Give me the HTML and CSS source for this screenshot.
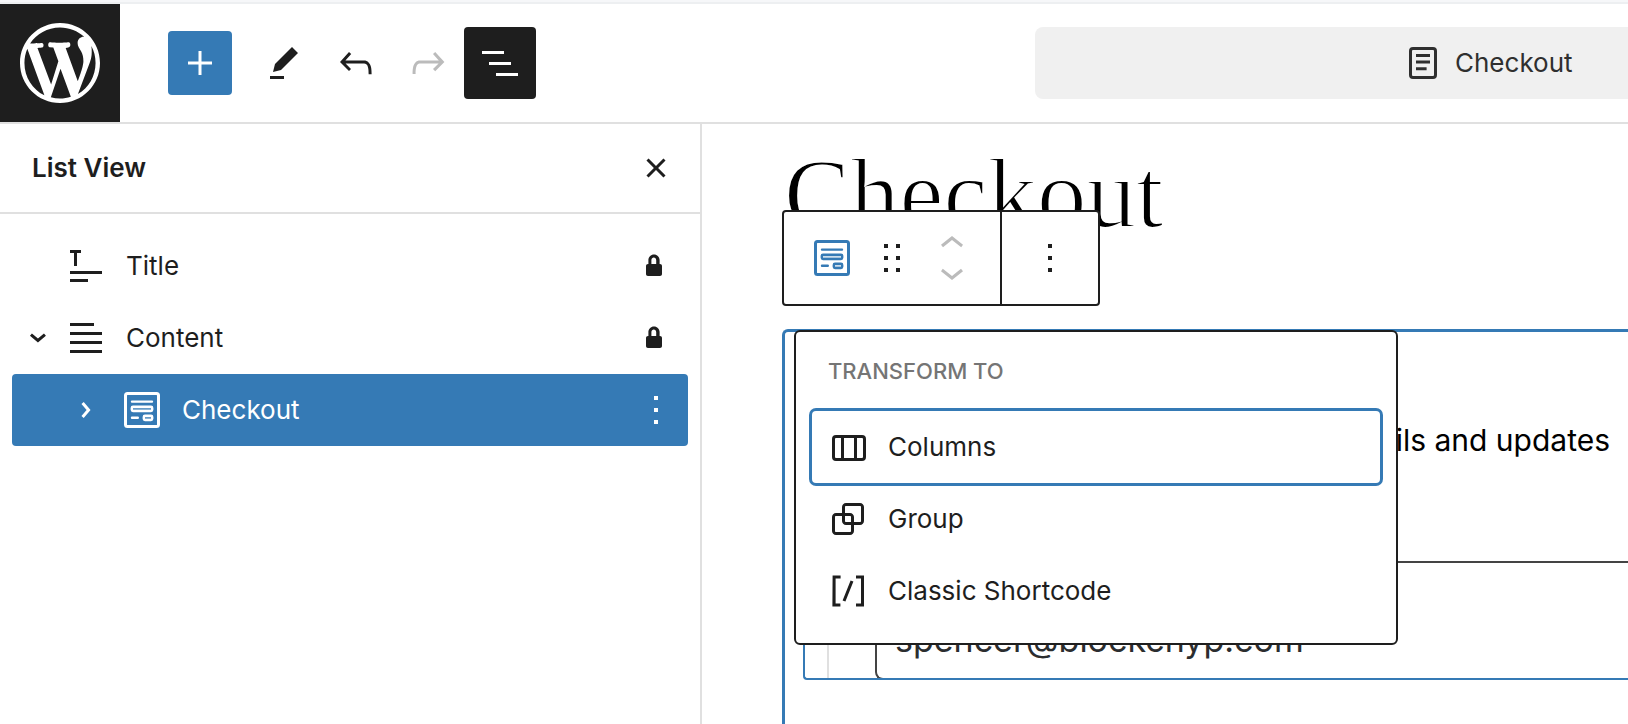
FILE: index.html
```html
<!DOCTYPE html>
<html lang="en">
<head>
<meta charset="utf-8">
<title>Checkout</title>
<link rel="stylesheet" href="styles.css">
</head>
<body>
<svg class="defs" aria-hidden="true">
  <symbol id="checkout" viewBox="0 0 24 24">
    <g fill="none" stroke="currentColor" stroke-linecap="round">
      <rect x="3.75" y="3.75" width="16.5" height="16.5" rx="1" stroke-width="1.5"/>
      <path d="M7 7.800H17M7 15.850H9.900" stroke-width="1.200"/>
      <rect x="6.900" y="10.400" width="10.200" height="2.100" rx=".6" fill="currentColor" fill-opacity=".25" stroke-width="1.200"/>
      <rect x="12.900" y="14.900" width="4.200" height="2.100" rx=".6" fill="currentColor" fill-opacity=".25" stroke-width="1.200"/>
    </g>
  </symbol>
  <symbol id="more" viewBox="0 0 24 24"><path d="M13 19h-2v-2h2v2zm0-6h-2v-2h2v2zm0-6h-2V5h2v2z"/></symbol>
  <symbol id="lock" viewBox="0 0 24 24"><path d="M15 11h-.2V9c0-1.5-1.2-2.8-2.8-2.8S9.2 7.500 9.200 9v2H9c-.6 0-1 .4-1 1v4c0 .6.4 1 1 1h6c.6 0 1-.4 1-1v-4c0-.6-.4-1-1-1zm-1.800 0h-2.500V9c0-.7.6-1.200 1.200-1.200s1.200.6 1.200 1.200v2z"/></symbol>
  <symbol id="chevron" viewBox="0 0 24 24"><path d="M10.862 8.040L14.280 12.029L10.862 16.017L9.723 15.040L12.305 12.029L9.723 9.017L10.862 8.040Z"/></symbol>
</svg>

<header class="topbar">
  <a class="logo" href="#" aria-label="View pages">
    <svg viewBox="0 0 20 20"><path d="M20 10c0-5.510-4.490-10-10-10C4.480 0 0 4.490 0 10c0 5.520 4.480 10 10 10 5.510 0 10-4.480 10-10zM7.780 15.370L4.370 6.220c.55-.02 1.170-.08 1.170-.08.5-.06.44-1.130-.06-1.110 0 0-1.450.11-2.370.11-.18 0-.37 0-.58-.01C4.120 2.690 6.870 1.110 10 1.110c2.330 0 4.450.87 6.050 2.340-.68-.11-1.650.39-1.650 1.580 0 .74.45 1.360.9 2.100.35.61.55 1.360.55 2.460 0 1.490-1.400 5-1.400 5l-3.030-8.370c.54-.02.82-.17.82-.17.5-.05.44-1.250-.06-1.220 0 0-1.440.12-2.380.12-.87 0-2.330-.12-2.330-.12-.5-.03-.56 1.200-.06 1.220l.92.08 1.260 3.410zM17.410 10c.24-.64.74-1.870.43-4.250.7 1.290 1.050 2.710 1.050 4.250 0 3.290-1.730 6.240-4.400 7.780.97-2.590 1.940-5.200 2.920-7.780zM6.100 18.090C3.120 16.650 1.110 13.530 1.110 10c0-1.300.23-2.480.72-3.590C3.250 10.300 4.670 14.200 6.100 18.090zm4.030-6.630l2.580 6.980c-.86.29-1.760.45-2.710.45-.79 0-1.570-.11-2.290-.33.81-2.380 1.620-4.740 2.420-7.100z"/></svg>
  </a>
  <div class="tools">
    <button class="tool add" type="button" aria-label="Add block"><svg class="icon" viewBox="0 0 24 24"><path d="M11.250 12.750V18H12.750V12.750H18V11.250H12.750V6H11.250V11.250H6V12.750H11.250Z"/></svg></button>
    <button class="tool" type="button" aria-label="Tools"><svg class="icon" viewBox="0 0 24 24"><path d="m19 7-3-3-8.500 8.500-1 4 4-1L19 7Zm-7 11.500H5V20h7v-1.500Z"/></svg></button>
    <button class="tool" type="button" aria-label="Undo"><svg class="icon" viewBox="0 0 24 24"><path d="M18.300 11.700c-.6-.6-1.400-.9-2.300-.9H6.700l2.900-3.300-1.100-1-4.500 5L8.500 16l1-1-2.700-2.700H16c.5 0 .9.2 1.300.5 1 1 1 3.400 1 4.500v.3h1.500v-.2c0-1.500 0-4.300-1.500-5.700z"/></svg></button>
    <button class="tool" type="button" aria-label="Redo" disabled><svg class="icon" viewBox="0 0 24 24"><path d="M15.600 6.500l-1.100 1 2.900 3.300H8c-.9 0-1.700.3-2.300.9-1.400 1.500-1.400 4.200-1.400 5.600v.2h1.500v-.3c0-1.100 0-3.500 1-4.500.3-.3.7-.5 1.300-.5h9.200L14.500 15l1.100 1.100 4.600-4.600-4.600-5z"/></svg></button>
    <button class="tool active" type="button" aria-label="List View" aria-pressed="true"><svg class="icon" viewBox="0 0 24 24"><path d="M3 6h11v1.500H3V6Zm3.500 5.500h11V13h-11v-1.500ZM21 17H10v1.500h11V17Z"/></svg></button>
  </div>
  <button class="document" type="button">
    <svg class="icon" viewBox="0 0 24 24"><path d="M15.500 7.500h-7V9h7V7.500Zm-7 3.300h7v1.500h-7V10.800Zm5.300 3.300h-5.300v1.500h5.300v-1.500Z"/><path fill-rule="evenodd" d="M17 4H7a2 2 0 0 0-2 2v12a2 2 0 0 0 2 2h10a2 2 0 0 0 2-2V6a2 2 0 0 0-2-2ZM7 5.500h10a.5.5 0 0 1 .5.5v12a.5.5 0 0 1-.5.5H7a.5.5 0 0 1-.5-.5V6a.5.5 0 0 1 .5-.5Z"/></svg>
    <span>Checkout</span>
  </button>
</header>

<div class="workspace">
  <aside class="sidebar">
    <div class="sidebar-head">
      <h2>List View</h2>
      <button class="plain" type="button" aria-label="Close"><svg class="icon" viewBox="0 0 24 24"><path d="M12 13.060l3.712 3.713 1.061-1.060L13.061 12l3.712-3.712-1.060-1.060L12 10.938 8.288 7.227l-1.061 1.060L10.939 12l-3.712 3.712 1.060 1.061L12 13.061z"/></svg></button>
    </div>
    <ul class="tree">
      <li class="row">
        <span class="spacer"></span>
        <a href="#"><svg class="icon" viewBox="0 0 24 24"><path d="m4 5.500h2v6.500h1.500v-6.500h2v-1.500h-5.500v1.500zm16 10.500h-16v-1.500h16v1.500zm-7 4h-9v-1.500h9v1.500z"/></svg>Title</a>
        <svg class="icon lock"><use href="#lock"/></svg>
      </li>
      <li class="row">
        <button class="plain" type="button" aria-label="Collapse"><svg class="icon down"><use href="#chevron"/></svg></button>
        <a href="#"><svg class="icon" viewBox="0 0 24 24"><path d="M4 4.500h12V6H4zM4 9h16v1.500H4zM4 13.500h16V15H4zM4 18h16v1.500H4z"/></svg>Content</a>
        <svg class="icon lock"><use href="#lock"/></svg>
      </li>
      <li class="row nested selected">
        <button class="plain" type="button" aria-label="Expand"><svg class="icon"><use href="#chevron"/></svg></button>
        <a href="#"><svg class="icon"><use href="#checkout"/></svg>Checkout</a>
        <button class="plain" type="button" aria-label="Options"><svg class="icon"><use href="#more"/></svg></button>
      </li>
    </ul>
  </aside>

  <main class="canvas">
    <h1>Checkout</h1>
    <section class="block">
      <div class="fields">
        <div class="step">
          <p>We'll email you details and updates</p>
          <input type="email" aria-label="Email address" value="spencer@blockchyp.com">
        </div>
      </div>
    </section>

    <div class="toolbar" role="toolbar" aria-label="Block tools">
      <div class="group">
        <button class="plain blue" type="button" aria-label="Checkout"><svg class="icon"><use href="#checkout"/></svg></button>
        <button class="plain" type="button" aria-label="Drag"><svg class="icon" viewBox="0 0 24 24"><path d="M8 7h2V5H8v2zm0 6h2v-2H8v2zm0 6h2v-2H8v2zm6-14v2h2V5h-2zm0 8h2v-2h-2v2zm0 6h2v-2h-2v2z"/></svg></button>
        <div class="movers">
          <button class="plain" type="button" aria-label="Move up" disabled><svg viewBox="0 6 24 12"><path d="M6.500 12.400L12 8l5.500 4.400-.9 1.200L12 10l-4.500 3.600-1-1.200z"/></svg></button>
          <button class="plain" type="button" aria-label="Move down" disabled><svg viewBox="0 6 24 12"><path d="M17.500 11.600L12 16l-5.500-4.400.9-1.200L12 14l4.500-3.600 1 1.200z"/></svg></button>
        </div>
      </div>
      <div class="group">
        <button class="plain" type="button" aria-label="Options"><svg class="icon"><use href="#more"/></svg></button>
      </div>
    </div>

    <div class="popover" role="menu" aria-labelledby="transform">
      <h3 id="transform">Transform to</h3>
      <button class="item focused" type="button" role="menuitem"><svg class="icon" viewBox="0 0 24 24"><path fill-rule="evenodd" d="M15 7.500h-5v10h5v-10zm1.500 0v10H19a.5.5 0 00.5-.5V8a.5.5 0 00-.5-.5h-2.500zM6 7.500h2.500v10H6a.5.5 0 01-.5-.5V8a.5.5 0 01.5-.5zM6 6h13a2 2 0 012 2v9a2 2 0 01-2 2H6a2 2 0 01-2-2V8a2 2 0 012-2z"/></svg>Columns</button>
      <button class="item" type="button" role="menuitem"><svg class="icon" viewBox="0 0 24 24"><path d="M18 4h-7c-1.100 0-2 .9-2 2v3H6c-1.100 0-2 .9-2 2v7c0 1.100.9 2 2 2h7c1.100 0 2-.9 2-2v-3h3c1.100 0 2-.9 2-2V6c0-1.100-.9-2-2-2zm-4.500 14c0 .3-.2.5-.5.5H6c-.3 0-.5-.2-.5-.5v-7c0-.3.2-.5.5-.5h3V13c0 1.100.9 2 2 2h2.500v3zm0-4.500H11c-.3 0-.5-.2-.5-.5v-2.500H13c.3 0 .5.2.5.5v2.500zm5-.5c0 .3-.2.5-.5.5h-3V11c0-1.100-.9-2-2-2h-2.500V6c0-.3.2-.5.5-.5h7c.3 0 .5.2.5.5v7z"/></svg>Group</button>
      <button class="item" type="button" role="menuitem"><svg class="icon" viewBox="0 0 24 24"><path d="M16 4.200v1.500h2.500v12.500H16v1.500h4V4.200h-4zM4.200 19.800h4v-1.500H5.800V5.800h2.500V4.200h-4l-.1 15.600zm5.100-3.100l1.400.6 4-10-1.400-.6-4 10z"/></svg>Classic Shortcode</button>
    </div>
  </main>
</div>
</body>
</html>
```
FILE: styles.css
```css
* {
  box-sizing: border-box;
}

body {
  --blue: #357ab5;
  --ink: #1e1e1e;
  --line: #e0e0e0;
  display: flex;
  flex-direction: column;
  height: 100vh;
  margin: 0;
  overflow: hidden;
  border-top: 2px solid #f6f7f9;
  background: #fff;
  color: var(--ink);
  font: 26px/32px Inter, "Liberation Sans", sans-serif;
}

h1,
h2,
h3,
p,
ul {
  margin: 0;
  padding: 0;
}

a {
  color: inherit;
  text-decoration: none;
}

button {
  padding: 0;
  border: 0;
  background: none;
  color: inherit;
  font: inherit;
}

svg {
  display: block;
  fill: currentColor;
}

.defs {
  position: absolute;
  width: 0;
  height: 0;
}

.icon {
  flex: none;
  width: 48px;
  height: 48px;
}

.plain {
  display: block;
  flex: none;
}

.plain:disabled,
.tool:disabled {
  color: #bbb;
}

.topbar {
  display: flex;
  flex: none;
  align-items: center;
  height: 122px;
  border-top: 2px solid #edeff1;
  border-bottom: 2px solid var(--line);
}

.logo {
  display: grid;
  flex: none;
  place-items: center;
  align-self: stretch;
  width: 120px;
  background: var(--ink);
  color: #fff;
}

.logo svg {
  width: 80px;
}

.tools {
  display: flex;
  flex: none;
  align-items: center;
  padding-left: 48px;
}

.tool {
  display: grid;
  place-items: center;
  width: 72px;
  height: 72px;
  border-radius: 4px;
}

.tool.add {
  width: 64px;
  height: 64px;
  margin-right: 16px;
  background: var(--blue);
  color: #fff;
}

.tool.active {
  background: var(--ink);
  color: #fff;
}

.document {
  display: flex;
  flex: 1;
  align-items: center;
  gap: 8px;
  height: 72px;
  margin-left: 499px;
  padding-left: 364px;
  border-radius: 8px 0 0 8px;
  background: #f0f0f0;
  color: #2f2f2f;
}

.workspace {
  display: flex;
  flex: 1;
  min-height: 0;
}

.sidebar {
  flex: none;
  width: 702px;
  border-right: 2px solid var(--line);
}

.sidebar-head {
  display: flex;
  align-items: center;
  justify-content: space-between;
  height: 90px;
  padding: 0 20px 0 32px;
  border-bottom: 2px solid var(--line);
}

h2 {
  font-size: 26px;
  font-weight: 600;
}

.tree {
  padding: 16px 12px;
  list-style: none;
}

.row {
  display: flex;
  align-items: center;
  height: 72px;
  padding: 0 8px 0 2px;
  border-radius: 4px;
}

.row a {
  display: flex;
  flex: 1;
  align-items: center;
  gap: 16px;
}

.row.nested {
  padding-left: 50px;
}

.row.selected {
  background: var(--blue);
  color: #fff;
}

.row.nested a {
  margin-left: 8px;
}

.spacer {
  width: 48px;
}

.lock {
  margin-right: 2px;
}

.down {
  transform: rotate(90deg);
}

.canvas {
  position: relative;
  display: flex;
  flex: 1;
  flex-direction: column;
  min-width: 0;
  padding: 13px 0 0 80px;
  overflow: hidden;
}

h1 {
  padding-left: 2px;
  color: #000;
  font: 400 99px/114px "Liberation Serif", serif;
  -webkit-text-stroke: 2px #fff;
}

.block {
  flex: 1;
  margin-top: 78px;
  border: 3px solid var(--blue);
  border-width: 3px 0 0 3px;
  border-radius: 6px 0 0 0;
}

.fields {
  height: 348px;
  margin-left: 18px;
  padding-left: 22px;
  overflow: hidden;
  border: 2px solid var(--blue);
  border-width: 0 0 2px 2px;
  border-radius: 0 0 0 4px;
}

.step {
  padding: 88px 0 0 46px;
  border-left: 2px solid var(--line);
}

.step p {
  padding-right: 18px;
  color: #000;
  font-size: 30px;
  line-height: 40px;
  text-align: right;
}

.step input {
  display: block;
  width: 100%;
  height: 119px;
  margin-top: 101px;
  padding: 38px 0 0 18px;
  border: 2px solid #444;
  border-right: 0;
  border-radius: 8px 0 0 8px;
  background: #fff;
  color: #2b2d2f;
  font: 34px/40px Inter, "Liberation Sans", sans-serif;
}

.toolbar {
  position: absolute;
  top: 86px;
  left: 80px;
  display: flex;
  height: 96px;
  border: 2px solid var(--ink);
  border-radius: 4px;
  background: #fff;
}

.group {
  display: flex;
  align-items: center;
  gap: 12px;
  padding: 0 24px;
}

.group + .group {
  border-left: 2px solid var(--ink);
}

.blue {
  color: var(--blue);
}

.movers {
  display: grid;
  gap: 4px;
}

.movers svg {
  width: 48px;
  height: 24px;
}

.popover {
  position: absolute;
  top: 206px;
  left: 92px;
  width: 604px;
  padding: 24px 16px 16px;
  border: 2px solid var(--ink);
  border-radius: 6px;
  background: #fff;
}

h3 {
  padding: 0 16px;
  margin-bottom: 24px;
  color: #757575;
  font-size: 22px;
  font-weight: 500;
  line-height: 31px;
  text-transform: uppercase;
}

.item {
  display: flex;
  align-items: center;
  gap: 16px;
  width: 100%;
  height: 72px;
  padding: 0 12px;
  border-radius: 4px;
}

.item.focused {
  box-shadow: 0 0 0 3px var(--blue);
}
```
